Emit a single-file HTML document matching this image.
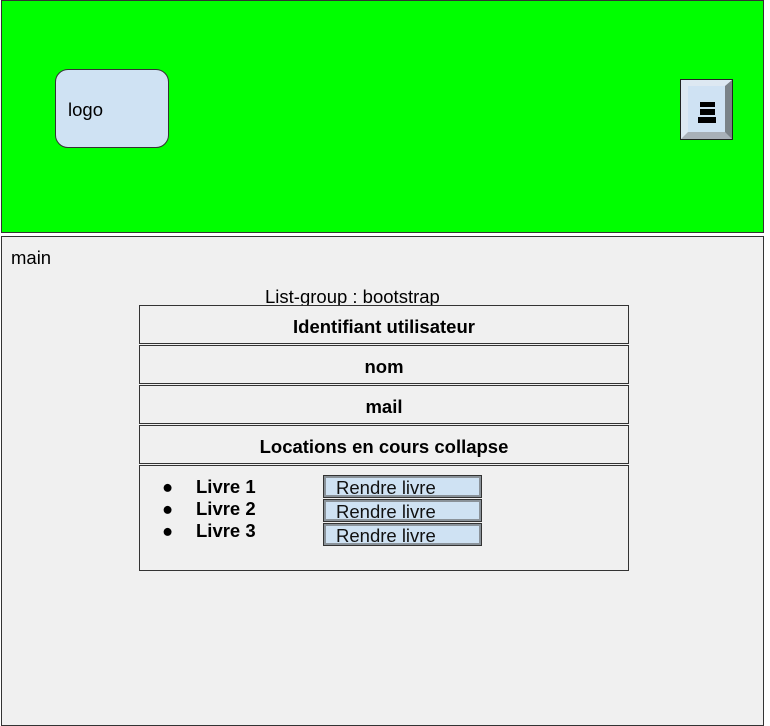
<html><head><style>
body{margin:0;width:770px;height:718px;background:#fff;position:relative;font-family:"Liberation Sans",sans-serif;overflow:hidden}
div{position:absolute;box-sizing:border-box}
.row{left:139px;width:490px;height:39px;border:1px solid #333;background:#f0f0f0;font-weight:bold;font-size:18.5px;text-align:center;line-height:41px;color:#000}
.btn{left:323px;width:159px;height:23px;border:1px solid #333;background:#cfe2f3;box-shadow:inset 0 0 0 2px #8a9299;font-size:18.5px;line-height:24px;padding-left:12px;color:#111}
.li{left:162px;font-size:18.5px;font-weight:bold}
.li span{position:absolute;left:34px;white-space:nowrap}
</style></head><body>
<div style="left:1px;top:0;width:763px;height:233px;background:#00ff00;border:1px solid #333"></div>
<div style="left:55px;top:69px;width:114px;height:79px;background:#cfe2f3;border:1px solid #333;border-radius:13px;font-size:18.5px;padding:29px 0 0 12px">logo</div>
<div style="left:681px;top:80px;width:51px;height:59px;border:1px solid #222;background:#cfe2f3;border-top:6px solid #dde8f2;border-left:7px solid #dde8f2;border-right:7px solid #7a8288;border-bottom:7px solid #a8b0b8;outline:1px solid #222"></div>
<div style="left:700px;top:102px;width:15px;height:5px;background:#000"></div>
<div style="left:700px;top:109px;width:15px;height:6px;background:#000"></div>
<div style="left:698px;top:117px;width:18px;height:6px;background:#000"></div>
<div style="left:1px;top:236px;width:763px;height:490px;background:#f0f0f0;border:1px solid #333"></div>
<div style="left:11px;top:247px;font-size:18.5px">main</div>
<div style="left:265px;top:286px;font-size:18.5px">List-group : bootstrap</div>
<div class="row" style="top:305px">Identifiant utilisateur</div>
<div class="row" style="top:345px">nom</div>
<div class="row" style="top:385px">mail</div>
<div class="row" style="top:425px">Locations en cours collapse</div>
<div class="row" style="top:465px;height:106px"></div>
<div class="li" style="top:476px">●<span>Livre 1</span></div>
<div class="li" style="top:498px">●<span>Livre 2</span></div>
<div class="li" style="top:520px">●<span>Livre 3</span></div>
<div class="btn" style="top:475px">Rendre livre</div>
<div class="btn" style="top:499px">Rendre livre</div>
<div class="btn" style="top:523px">Rendre livre</div>
</body></html>
